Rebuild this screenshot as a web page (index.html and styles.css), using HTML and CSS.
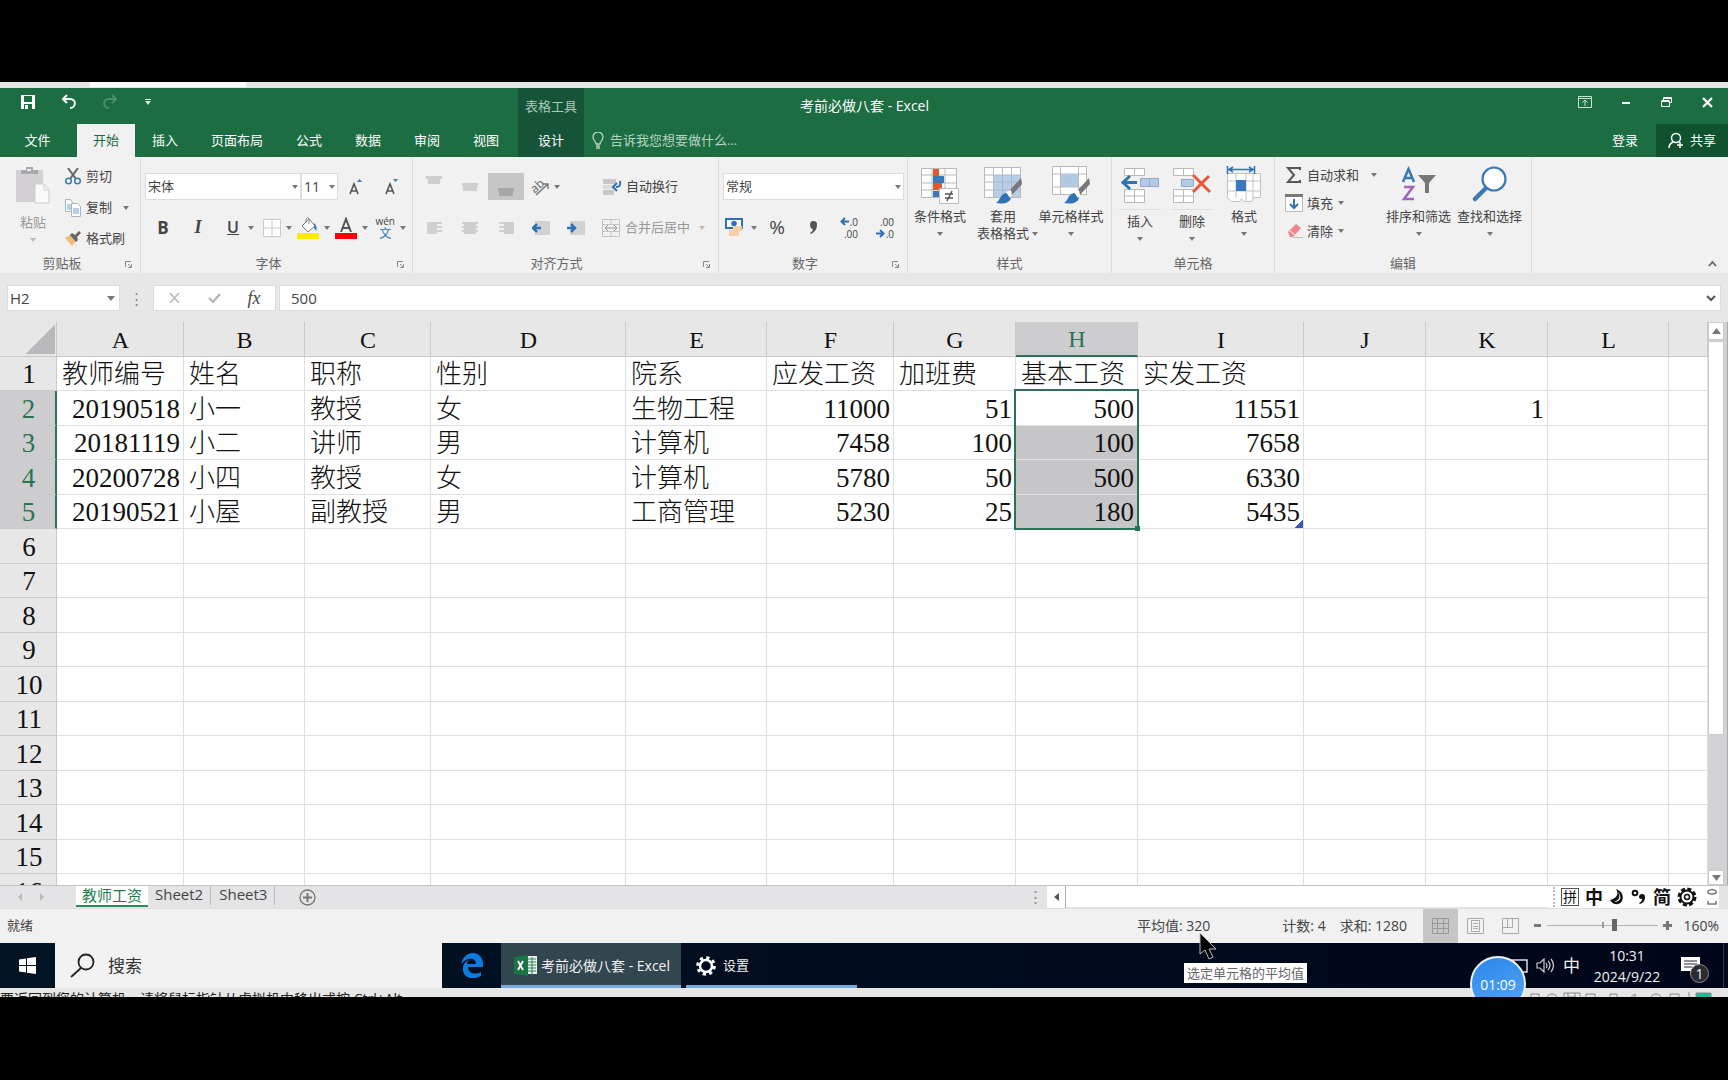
FILE: index.html
```html
<!DOCTYPE html>
<html lang="zh-CN">
<head>
<meta charset="utf-8">
<title>考前必做八套 - Excel</title>
<link rel="stylesheet" href="styles.css">
</head>
<body>
<div class="screen">
<div class="host-tabs"><span></span></div>
<header class="titlebar">
  <div class="title-left">
    <div class="quick">
      <button aria-label="保存"><svg width="16" height="16" viewBox="0 0 16 16"><path d="M1 1h14v14H1z" fill="#fff"/><path d="M4 2h8v6H4zM4 10h8v5H4z" fill="#1c6d42"/><path d="M5 11h3v4H5z" fill="#fff"/></svg></button>
      <button aria-label="撤消"><svg width="16" height="16" viewBox="0 0 16 16" fill="none" stroke="#fff" stroke-width="2"><path d="M6 1 2 5l4 4M2 5h7c7 0 6 9 0 9"/></svg></button>
      <button aria-label="恢复"><svg width="16" height="16" viewBox="0 0 16 16" fill="none" stroke="#4a8f6c" stroke-width="2"><path d="m10 1 4 4-4 4M14 5H7c-7 0-6 9 0 9"/></svg></button>
      <button aria-label="自定义"><svg width="8" height="8" viewBox="0 0 8 8" fill="#d5e6dc"><path d="M1 1h6v1H1zM1 3h6L4 7z"/></svg></button>
    </div>
    <nav class="tabs">
      <button class="tab file">文件</button><button class="tab active">开始</button><button class="tab">插入</button><button class="tab">页面布局</button><button class="tab">公式</button><button class="tab">数据</button><button class="tab">审阅</button><button class="tab">视图</button>
    </nav>
  </div>
  <div class="context"><span>表格工具</span><button class="tab">设计</button></div>
  <div class="title-main">
    <h1>考前必做八套 - Excel</h1>
    <label class="tell"><svg width="12" height="18" viewBox="0 0 12 18" fill="none" stroke="#b5d3c2" stroke-width="1.3"><path d="M4 12c0-3-3-3-3-7a5 5 0 0 1 10 0c0 4-3 4-3 7zM4 14h4M4 16h4"/></svg><input placeholder="告诉我您想要做什么..."></label>
  </div>
  <div class="title-right">
    <div class="winbtns">
      <button aria-label="功能区显示选项"><svg width="14" height="12" viewBox="0 0 14 12" fill="none" stroke="#c9dfd2"><path d="M.5.5h13v11H.5zM.5 2.500h13M7 10V4M4.500 6.500 7 4l2.500 2.500"/></svg></button>
      <button aria-label="最小化"><svg width="8" height="8" viewBox="0 0 8 8"><path d="M0 4h8v2H0z" fill="#fff"/></svg></button>
      <button aria-label="还原"><svg width="12" height="12" viewBox="0 0 12 12" fill="none" stroke="#fff"><path d="M.5 5.500h8v5h-8zM.5 4.500h8M2.500 4V1.500h8v5H9M2.500 2.500h8"/></svg></button>
      <button aria-label="关闭"><svg width="11" height="11" viewBox="0 0 11 11" stroke="#fff" stroke-width="2.200"><path d="m1 1 9 9M10 1l-9 9"/></svg></button>
    </div>
    <div class="account"><button class="login">登录</button><button class="share"><svg width="16" height="17" viewBox="0 0 16 17" fill="none" stroke="#fff" stroke-width="1.500"><circle cx="8" cy="6" r="4.500"/><path d="M1 16c0-4 2-5 4-6M9 13h6M12 10v6"/></svg>共享</button></div>
  </div>
</header>

<section class="ribbon">
  <div class="group clipboard">
    <div class="body">
      <button class="big low off"><svg width="36" height="38" viewBox="0 0 36 38"><path d="M1 4h27v32H1z" fill="#d3d0d3"/><path d="M6 8V4h5V1h7v3h5v4z" fill="#a9a8ac"/><path d="M12 3h4v2h-4z" fill="#eee"/><path d="M20 18h9l5 6v13H20z" fill="#fafafa" stroke="#ccc"/><path d="M29 18v6h5" fill="none" stroke="#ccc"/></svg><span>粘贴</span><i class="caret"></i></button>
      <div class="list">
        <button><svg width="16" height="17" viewBox="0 0 16 17" fill="none"><path d="m3 0 8 11M13 0 5 11" stroke="#666" stroke-width="2"/><circle cx="3.500" cy="13" r="2.800" stroke="#3c7ab5" stroke-width="1.500"/><circle cx="12.500" cy="13" r="2.800" stroke="#3c7ab5" stroke-width="1.500"/></svg>剪切</button>
        <button><svg width="16" height="18" viewBox="0 0 16 18" fill="#fff" stroke="#a9b4c4"><path d="M.5.5h5l2 3v9h-7z"/><path d="M2 5h4v6H2z" fill="#b4d0ee" stroke="none"/><path d="M6.500 4.500h6l3 3v10h-9z"/><path d="M8 9h6v6H8z" fill="#b4d0ee" stroke="none"/></svg>复制<i class="caret"></i></button>
        <button><svg width="16" height="15" viewBox="0 0 16 15"><path d="m0 7 5-3 6 6-4 5z" fill="#efbd77"/><path d="m5 4 2-2 3 2 4-4 2 2-4 4 1 3-2 2z" fill="#666"/></svg>格式刷</button>
      </div>
    </div>
    <footer>剪贴板<svg class="launch" viewBox="0 0 7 7"><path d="M.5 6V.5H6M3 3l3 3M6.500 3v3.500H3"/></svg></footer>
  </div>

  <div class="group font">
    <div class="rows">
      <div class="row"><select class="face" aria-label="字体"><option>宋体</option></select><select class="size" aria-label="字号"><option>11</option></select>
        <button class="w36" aria-label="增大字号"><svg width="14" height="18" viewBox="0 0 14 18"><path d="m1 16 4-10 4 10M2 13h6" fill="none" stroke="#555" stroke-width="1.600"/><path d="m8 4 2.500-3L13 4z" fill="#3c7ab5"/></svg></button>
        <button class="w36" aria-label="减小字号"><svg width="14" height="18" viewBox="0 0 14 18"><path d="m1 16 4-10 4 10M2 13h6" fill="none" stroke="#555" stroke-width="1.600"/><path d="m8 1 2.500 3L13 1z" fill="#3c7ab5"/></svg></button></div>
      <div class="row"><button class="glyph w36"><b>B</b></button><button class="glyph w34"><em>I</em></button><button class="glyph split wide"><u>U</u><i class="caret"></i></button>
        <button class="split" aria-label="边框"><svg width="18" height="18" viewBox="0 0 18 18" fill="#fff" stroke="#ccc"><path d="M.5.5h17v17H.5zM9 1v16M1 9h16"/></svg><i class="caret"></i></button>
        <button class="split" aria-label="填充颜色"><svg width="22" height="22" viewBox="0 0 22 22"><path d="m5 9 7-7 6 7-7 6z" fill="#fff" stroke="#777"/><path d="M9 6V2q2-3 3 0v5" fill="none" stroke="#888"/><path d="M17 6q4 4 2 8l-2-3z" fill="#3c7ab5"/><path d="M0 16h22v6H0z" fill="#ffed00"/></svg><i class="caret"></i></button>
        <button class="split" aria-label="字体颜色"><svg width="22" height="22" viewBox="0 0 22 22"><path d="M6 15 11 2l5 13M7.500 11h7" fill="none" stroke="#555" stroke-width="2"/><path d="M0 16h22v6H0z" fill="#fb0007"/></svg><i class="caret"></i></button>
        <button class="split phonetic"><span>wén<b>文</b></span><i class="caret"></i></button></div>
    </div>
    <footer>字体<svg class="launch" viewBox="0 0 7 7"><path d="M.5 6V.5H6M3 3l3 3M6.500 3v3.500H3"/></svg></footer>
  </div>

  <div class="group align">
    <div class="rows">
      <div class="row"><button class="w36 up" aria-label="顶端对齐"><svg width="16" height="8" viewBox="0 0 16 8" fill="#cfcfcf"><path d="M0 0h16v3H0zM2 3h12v5H2z"/></svg></button><button class="w36" aria-label="垂直居中"><svg width="16" height="8" viewBox="0 0 16 8" fill="#cfcfcf"><path d="M0 0h16v3H0zM1 3h14v5H1z"/></svg></button><button class="w36 pressed down" aria-label="底端对齐"><svg width="16" height="8" viewBox="0 0 16 8" fill="#a8a8a8"><path d="M0 0h16v3H0zM1 3h14v5H1z"/></svg></button>
        <button class="split turn" aria-label="方向"><svg width="19" height="18" viewBox="0 0 19 18"><text x="1" y="14" transform="rotate(-40 5 10)" font-size="12" fill="#666">ab</text><path d="M6 17 18 6M13 6h5v5" fill="none" stroke="#777" stroke-width="1.500"/></svg><i class="caret"></i></button>
        <button class="wide-btn"><svg width="19" height="16" viewBox="0 0 19 16"><path d="M0 0h13v5H0zM0 11h11v5H0z" fill="#c8c8c8"/><path d="M0 6h11v4H0z" fill="#dcdcdc"/><path d="M17 2c1 5-1 6-4 6M14 4l-4 4 4 4" fill="none" stroke="#2d72b5" stroke-width="2"/></svg>自动换行</button></div>
      <div class="row"><button class="w36" aria-label="左对齐"><svg width="15" height="12" viewBox="0 0 15 12" fill="#cfcfcf"><path d="M0 0h15v2H0zM0 4h15v2H0zM0 8h15v2H0zM0 0h10v12H0z"/></svg></button><button class="w36" aria-label="居中"><svg width="16" height="12" viewBox="0 0 16 12" fill="#cfcfcf"><path d="M0 0h16v2H0zM0 4h16v2H0zM0 8h16v2H0zM2 0h12v12H2z"/></svg></button><button class="w36" aria-label="右对齐"><svg width="15" height="12" viewBox="0 0 15 12" fill="#cfcfcf"><path d="M0 0h15v2H0zM0 4h15v2H0zM0 8h15v2H0zM5 0h10v12H5z"/></svg></button>
        <button class="w34" aria-label="减少缩进量"><svg width="18" height="14" viewBox="0 0 18 14"><path d="M3 0h15v14H3z" fill="#d2d2d4"/><path d="M9 7H2M5 3 1 7l4 4" fill="none" stroke="#2d72b5" stroke-width="2.500"/></svg></button><button class="w36" aria-label="增加缩进量"><svg width="18" height="14" viewBox="0 0 18 14"><path d="M3 0h15v14H3z" fill="#d2d2d4"/><path d="M0 7h7M4 3l4 4-4 4" fill="none" stroke="#2d72b5" stroke-width="2.500"/></svg></button>
        <button class="wide-btn off merge"><svg width="18" height="18" viewBox="0 0 18 18" fill="none" stroke="#c4c4c4"><path d="M.5.5h17v17H.5zM.5 5.500h17M.5 12.500h17M9 1v4M9 13v4"/><path d="M3 9h12M6 6 3 9l3 3M12 6l3 3-3 3" stroke="#999"/></svg>合并后居中<i class="caret"></i></button></div>
    </div>
    <footer>对齐方式<svg class="launch" viewBox="0 0 7 7"><path d="M.5 6V.5H6M3 3l3 3M6.500 3v3.500H3"/></svg></footer>
  </div>

  <div class="group number">
    <div class="rows">
      <div class="row"><select class="format" aria-label="数字格式"><option>常规</option></select></div>
      <div class="row"><button class="split" aria-label="会计数字格式"><svg width="18" height="19" viewBox="0 0 18 19"><path d="M1 1h16v9H1z" fill="#fff" stroke="#2d72b5" stroke-width="2"/><circle cx="9" cy="5.500" r="2.800" fill="#2d72b5"/><path d="M8 8h9v5h-3v5H4v-6h4z" fill="#f6cfa5"/></svg><i class="caret"></i></button><button class="w36 pct">%</button><button class="w36" aria-label="千位分隔样式"><svg width="8" height="13" viewBox="0 0 8 13"><path d="M1 3a3.500 3.500 0 1 1 7 1C8 8 6 11 2 13l-1-1c2-1 3-3 3-4-2 0-3-2-3-5z" fill="#555"/></svg></button>
        <button class="w36 dec"><span><svg width="9" height="9" viewBox="0 0 9 9"><path d="M9 4.500H2M5 1 1.500 4.500 5 8" fill="none" stroke="#2d72b5" stroke-width="2"/></svg>.0</span><span>.00</span></button><button class="w36 dec"><span>.00</span><span><svg width="9" height="9" viewBox="0 0 9 9"><path d="M0 4.500h7M4 1l3.500 3.500L4 8" fill="none" stroke="#2d72b5" stroke-width="2"/></svg>.0</span></button></div>
    </div>
    <footer>数字<svg class="launch" viewBox="0 0 7 7"><path d="M.5 6V.5H6M3 3l3 3M6.500 3v3.500H3"/></svg></footer>
  </div>

  <div class="group styles">
    <div class="body">
      <button class="big"><svg width="38" height="38" viewBox="0 0 38 38"><path d="M.5 2.500h35v29H.5zM.5 9h35M.5 17h35M.5 24h35M11 3v28M24 3v28" fill="#fff" stroke="#b9b9b9"/><path d="M12 3h6v7h-6zM12 17h9v7h-9z" fill="#e0592c"/><path d="M12 10h11v7H12zM12 25h6v6h-6z" fill="#3a78b8"/><path d="M18.500 22.500h19v15h-19z" fill="#fff" stroke="#bbb"/><path d="M24 28h8M24 32h8M31 25l-5 10" stroke="#555" stroke-width="1.500"/></svg><span>条件格式</span><i class="caret"></i></button>
      <button class="big"><svg width="38" height="38" viewBox="0 0 38 38"><path d="M.5 1.500h36v30H.5zM.5 9h36M.5 16h36M.5 24h36M9.500 2v29M18.500 2v29M27.500 2v29" fill="#fff" stroke="#b9b9b9"/><path d="M10 9h26v22H10z" fill="#9ab9dc" opacity=".7"/><path d="m37 12-12 13 3 4 10-11z" fill="#777"/><path d="M12 37c4-2 4-9 10-10q5 1 5 5c-2 6-9 6-15 5z" fill="#2f73b6"/><path d="m22 26 5-2 1 5-2 3z" fill="#fff"/></svg><span>套用<br>表格格式<i class="caret"></i></span></button>
      <button class="big"><svg width="38" height="38" viewBox="0 0 38 38"><path d="M.5.5h34v28H.5zM.5 8h34M.5 21h34M8.500 1v28M26.500 1v28" fill="#fff" stroke="#b9b9b9"/><path d="M9 8h17v13H9z" fill="#b1c9e2"/><path d="m37 12-12 13 3 4 10-11z" fill="#777"/><path d="M12 37c4-2 4-9 10-10q5 1 5 5c-2 6-9 6-15 5z" fill="#2f73b6"/><path d="m22 26 5-2 1 5-2 3z" fill="#fff"/></svg><span>单元格样式</span><i class="caret"></i></button>
    </div>
    <footer>样式</footer>
  </div>

  <div class="group cells">
    <div class="body">
      <button class="big low ruled"><svg width="38" height="38" viewBox="0 0 38 38"><path d="M3.500 2.500h20v7h-20zM13.500 2.500v7M3.500 23.500h20v13h-20zM3.500 30h20M13.500 24v12" fill="#fff" stroke="#b9b9b9"/><path d="M19.500 12.500h18v8h-18zM28.500 12v8" fill="#b4cbe6" stroke="#8fa9c6"/><path d="M16 16.500H3M9 10l-7 6.500L9 23" fill="none" stroke="#2f73b6" stroke-width="3"/></svg><span>插入</span><i class="caret"></i></button>
      <button class="big low ruled"><svg width="38" height="38" viewBox="0 0 38 38"><path d="M.5 2.500h20v7H.5zM10.500 2.500v7M.5 23.500h20v13H.5zM.5 30h20M10.500 24v12" fill="#fff" stroke="#b9b9b9"/><path d="M8.500 13.500h12v7h-12z" fill="#b4cbe6" stroke="#8fa9c6"/><path d="m20 9 17 17M36 10 20 26" stroke="#e8573a" stroke-width="3"/></svg><span>删除</span><i class="caret"></i></button>
      <button class="big"><svg width="36" height="38" viewBox="0 0 36 38"><path d="M1.500 7.500h33v24h-7l-2 4h-8l-2-3-2 3h-8l-4-4zM1 15h33M1 25h33M10 8v24M20 8v27M27 8v24" fill="#fff" stroke="#c2c2c2"/><path d="M10 14h10v11H10z" fill="#3b76c2"/><path d="M1.500 0v8M28.500 0v8M3 3.500h24M7 1 3 3.500 7 6M23 1l4 2.500L23 6" fill="none" stroke="#2f73b6" stroke-width="1.500"/></svg><span>格式</span><i class="caret"></i></button>
    </div>
    <footer>单元格</footer>
  </div>

  <div class="group editing">
    <div class="body">
      <div class="list">
        <button><svg width="18" height="18" viewBox="0 0 18 18" fill="none" stroke="#555" stroke-width="2"><path d="M15 4V2H3l6 7-6 7h12v-2"/></svg>自动求和<i class="caret far"></i></button>
        <button><svg width="18" height="18" viewBox="0 0 18 18"><path d="M.5.5h17v17H.5z" fill="#fff" stroke="#bbb"/><path d="M0 0h18v3H0z" fill="#777"/><path d="M9 5v9M5 10l4 4 4-4" fill="none" stroke="#2f73b6" stroke-width="2"/></svg>填充<i class="caret"></i></button>
        <button><svg width="18" height="16" viewBox="0 0 18 16"><path d="m3 9 8-8 5 4-8 9H5z" fill="#f0868c"/><path d="m5 8 5 4" stroke="#fff"/><path d="M8 14.500h10" stroke="#bbb"/></svg>清除<i class="caret"></i></button>
      </div>
      <button class="big"><svg width="36" height="38" viewBox="0 0 36 38"><g fill="none" stroke-width="2.500"><path d="M2 16 7.500 3 13 16M4 12h7" stroke="#3a78b8"/><path d="M3 21h9L3 33h10" stroke="#a066bd"/></g><path d="M17 9h18l-7 8v10h-4V17z" fill="#777"/></svg><span>排序和筛选</span><i class="caret"></i></button>
      <button class="big"><svg width="36" height="38" viewBox="0 0 36 38"><path d="M3 33 15 21" stroke="#3a78b8" stroke-width="4.500" stroke-linecap="round"/><circle cx="22" cy="13" r="11.500" fill="#fff" stroke="#3a78b8" stroke-width="2.200"/></svg><span>查找和选择</span><i class="caret"></i></button>
    </div>
    <footer>编辑</footer>
  </div>
  <button class="collapse" aria-label="折叠功能区"><svg width="9" height="6" viewBox="0 0 9 6" fill="none" stroke="#666" stroke-width="1.800"><path d="m1 5 3.500-4L8 5"/></svg></button>
</section>

<section class="formula">
  <label class="namebox"><input value="H2" aria-label="名称框"><i class="caret big-caret"></i></label>
  <span class="dots">⋮</span>
  <div class="fx"><button aria-label="取消"><svg width="11" height="10" viewBox="0 0 11 10" stroke="#bdbdbd" stroke-width="1.800"><path d="m1 0 9 10M10 0 1 10"/></svg></button><button aria-label="输入"><svg width="13" height="10" viewBox="0 0 13 10" fill="none" stroke="#b5b5b5" stroke-width="2.200"><path d="m1 5 4 4 7-8"/></svg></button><button class="fxb"><em>fx</em></button></div>
  <label class="entry"><input value="500" aria-label="编辑栏"><svg width="10" height="7" viewBox="0 0 10 7" fill="none" stroke="#555" stroke-width="2"><path d="m1 1 4 4 4-4"/></svg></label>
</section>

<main class="sheet">
<div class="grid">
<table>
<colgroup><col class="c-row"><col class="c-a"><col class="c-b"><col class="c-c"><col class="c-d"><col class="c-e"><col class="c-f"><col class="c-g"><col class="c-g"><col class="c-i"><col class="c-g"><col class="c-g"><col class="c-b"><col></colgroup>
<thead><tr><th class="corner"></th><th>A</th><th>B</th><th>C</th><th>D</th><th>E</th><th>F</th><th>G</th><th class="on">H</th><th>I</th><th>J</th><th>K</th><th>L</th><th></th></tr></thead>
<tbody>
<tr><th>1</th><td>教师编号</td><td>姓名</td><td>职称</td><td>性别</td><td>院系</td><td>应发工资</td><td>加班费</td><td>基本工资</td><td>实发工资</td><td></td><td></td><td></td><td></td></tr>
<tr><th class="on">2</th><td class="n">20190518</td><td>小一</td><td>教授</td><td>女</td><td>生物工程</td><td class="n">11000</td><td class="n">51</td><td class="n anchor">500<div class="selection"></div></td><td class="n">11551</td><td></td><td class="n">1</td><td></td><td></td></tr>
<tr><th class="on">3</th><td class="n">20181119</td><td>小二</td><td>讲师</td><td>男</td><td>计算机</td><td class="n">7458</td><td class="n">100</td><td class="n sel">100</td><td class="n">7658</td><td></td><td></td><td></td><td></td></tr>
<tr><th class="on">4</th><td class="n">20200728</td><td>小四</td><td>教授</td><td>女</td><td>计算机</td><td class="n">5780</td><td class="n">50</td><td class="n sel">500</td><td class="n">6330</td><td></td><td></td><td></td><td></td></tr>
<tr><th class="on">5</th><td class="n">20190521</td><td>小屋</td><td>副教授</td><td>男</td><td>工商管理</td><td class="n">5230</td><td class="n">25</td><td class="n sel">180</td><td class="n table-end">5435</td><td></td><td></td><td></td><td></td></tr>
<tr><th>6</th><td></td><td></td><td></td><td></td><td></td><td></td><td></td><td></td><td></td><td></td><td></td><td></td><td></td></tr>
<tr><th>7</th><td></td><td></td><td></td><td></td><td></td><td></td><td></td><td></td><td></td><td></td><td></td><td></td><td></td></tr>
<tr><th>8</th><td></td><td></td><td></td><td></td><td></td><td></td><td></td><td></td><td></td><td></td><td></td><td></td><td></td></tr>
<tr><th>9</th><td></td><td></td><td></td><td></td><td></td><td></td><td></td><td></td><td></td><td></td><td></td><td></td><td></td></tr>
<tr><th>10</th><td></td><td></td><td></td><td></td><td></td><td></td><td></td><td></td><td></td><td></td><td></td><td></td><td></td></tr>
<tr><th>11</th><td></td><td></td><td></td><td></td><td></td><td></td><td></td><td></td><td></td><td></td><td></td><td></td><td></td></tr>
<tr><th>12</th><td></td><td></td><td></td><td></td><td></td><td></td><td></td><td></td><td></td><td></td><td></td><td></td><td></td></tr>
<tr><th>13</th><td></td><td></td><td></td><td></td><td></td><td></td><td></td><td></td><td></td><td></td><td></td><td></td><td></td></tr>
<tr><th>14</th><td></td><td></td><td></td><td></td><td></td><td></td><td></td><td></td><td></td><td></td><td></td><td></td><td></td></tr>
<tr><th>15</th><td></td><td></td><td></td><td></td><td></td><td></td><td></td><td></td><td></td><td></td><td></td><td></td><td></td></tr>
<tr><th>16</th><td></td><td></td><td></td><td></td><td></td><td></td><td></td><td></td><td></td><td></td><td></td><td></td><td></td></tr>
</tbody>
</table>
</div>
<div class="vscroll"><button aria-label="向上"><svg width="9" height="6" viewBox="0 0 9 6"><path d="m0 6 4.500-6L9 6z" fill="#777"/></svg></button><div class="thumb"></div><button class="end" aria-label="向下"><svg width="9" height="6" viewBox="0 0 9 6"><path d="m0 0 4.500 6L9 0z" fill="#777"/></svg></button></div>
</main>

<section class="sheettabs">
  <div class="nav"><svg width="4" height="8" viewBox="0 0 4 8"><path d="M4 0v8L0 4z" fill="#bbb"/></svg><svg width="4" height="8" viewBox="0 0 4 8"><path d="M0 0v8l4-4z" fill="#bbb"/></svg></div>
  <button class="st active">教师工资</button><button class="st">Sheet2</button><button class="st">Sheet3</button>
  <button class="add" aria-label="新工作表"><svg width="17" height="17" viewBox="0 0 17 17" fill="none" stroke="#777" stroke-width="1.300"><circle cx="8.500" cy="8.500" r="7.500"/><path d="M4 8.500h9M8.500 4v9" stroke-width="2"/></svg></button>
  <div class="hscroll"><span class="dots">⋮</span><button aria-label="向左"><svg width="5" height="8" viewBox="0 0 5 8"><path d="M5 0v8L0 4z" fill="#555"/></svg></button><div class="track"></div></div>
  <div class="ime"><i class="grip"></i><span class="boxed">拼</span><b>中</b><svg width="16" height="18" viewBox="0 0 16 18"><path d="M7 1c3 5 1 9-6 11 3 5 9 6 12 1C15 8 13 3 7 1z" fill="#111"/><path d="M8 3c4 4 3 9-3 11 8 0 8-7 3-11z" fill="#fff"/></svg><svg width="16" height="18" viewBox="0 0 16 18"><circle cx="4" cy="5" r="2.300" fill="none" stroke="#111" stroke-width="2"/><path d="M8 9a3 3 0 1 1 6 0c0 4-2 6-5 7l-1-1c2-1 3-2 3-4-2 0-3-1-3-2z" fill="#111"/></svg><b>简</b><svg width="20" height="20" viewBox="0 0 20 20" fill="none" stroke="#111"><circle cx="10" cy="10" r="8" stroke-width="3" stroke-dasharray="4 2.300"/><circle cx="10" cy="10" r="6.500" stroke-width="2"/><circle cx="10" cy="10" r="2.500" stroke-width="1.500"/></svg><svg class="ime-end" width="10" height="18" viewBox="0 0 10 18" fill="none" stroke="#777" stroke-width="1.500"><path d="M1 5V3q4-3 8 0v2q-4 2-8 0M1 13v3h8v-3"/></svg></div>
</section>

<section class="status">
  <span>就绪</span>
  <span class="avg">平均值: 320</span><span class="cnt">计数: 4</span><span class="sum">求和: 1280</span>
  <div class="views">
    <button class="pressed" aria-label="普通"><svg width="17" height="16" viewBox="0 0 17 16" fill="none" stroke="#999"><path d="M.5.500h16v15H.5zM.5 5.500h16M.5 10.500h16M5.500.500v15M11.500.500v15"/></svg></button>
    <button aria-label="页面布局"><svg width="17" height="16" viewBox="0 0 17 16" fill="none" stroke="#aaa"><path d="M.5.500h16v15H.5zM4.500 2.500h8v11h-8zM6 5.500h5M6 8.500h5M6 10.500h5"/></svg></button>
    <button aria-label="分页预览"><svg width="17" height="16" viewBox="0 0 17 16" fill="none" stroke="#aaa"><path d="M.5.500h16v15H.5zM.5 9.500h10v-9M5.500.500v9"/></svg></button>
  </div>
  <button class="zoom-btn" aria-label="缩小"><svg width="7" height="3" viewBox="0 0 7 3"><path d="M0 0h7v3H0z" fill="#777"/></svg></button>
  <input type="range" min="0" max="100" value="61" aria-label="缩放">
  <button class="zoom-btn" aria-label="放大"><svg width="9" height="9" viewBox="0 0 9 9"><path d="M0 3h9v3H0zM3 0h3v9H3z" fill="#777"/></svg></button>
  <span class="pctv">160%</span>
</section>

<section class="taskbar">
  <button class="start" aria-label="开始"><svg width="17" height="17" viewBox="0 0 17 17" fill="#fff"><path d="m0 2.500 7-1V8H0zM8 1.300 17 0v8H8zM0 9h7v6.500l-7-1zM8 9h9v8l-9-1.300z"/></svg></button>
  <label class="search"><svg width="25" height="25" viewBox="0 0 25 25" fill="none" stroke="#222" stroke-width="1.800"><circle cx="16" cy="9" r="7.500"/><path d="M11 15 1 24"/></svg><input placeholder="搜索" aria-label="搜索"></label>
  <button class="edge" aria-label="Edge"><svg width="22" height="25" viewBox="0 0 22 25"><path d="M0 11C2 4 6 0 12 0c7 0 10 6 10 11v3H7c0 7 8 8 13 5v4C11 28 1 24 2 15c0-4 3-7 6-8-1 1-2 2-2 4h9c0-7-9-7-15 0z" fill="#0a7be0"/></svg></button>
  <button class="task current"><svg width="24" height="21" viewBox="0 0 24 21"><path d="M13 1h10v18H13z" fill="#e8f3ec"/><path d="M14 4h8M14 7h8M14 10h8M14 13h8M14 16h8M18 2v17" stroke="#35805a"/><path d="M0 2 14 0v21L0 19z" fill="#1b7443"/><path d="m4 6 5 9M9 6l-5 9" stroke="#fff" stroke-width="1.800"/></svg>考前必做八套 - Excel</button>
  <button class="task settings"><svg width="20" height="20" viewBox="0 0 20 20" fill="none" stroke="#fff"><circle cx="10" cy="10" r="6" stroke-width="2.500"/><circle cx="10" cy="10" r="8.300" stroke-width="3" stroke-dasharray="3.200 3.320"/></svg>设置</button>
  <div class="tray">
    <svg class="net" width="20" height="14" viewBox="0 0 20 14" fill="none" stroke="#ddd" stroke-width="1.500"><path d="M1 1h18v12H1z"/></svg>
    <svg width="18" height="15" viewBox="0 0 18 15" fill="none" stroke="#ccc" stroke-width="1.200"><path d="M1 5h3l4-4v13l-4-4H1zM10 5q2 3 0 5M12 3q4 4 0 9M15 1q5 6 0 13"/></svg>
    <span class="lang">中</span>
    <time>10:31<br>2024/9/22</time>
    <span class="notice"><svg width="19" height="18" viewBox="0 0 19 18"><path d="M0 0h19v14h-6l-4 4v-4H0z" fill="#fff"/><path d="M3 4h13M3 7h13M3 10h8" stroke="#223"/></svg><i>1</i></span>
  </div>
</section>
<div class="host-status"><span>要返回到您的计算机，请将鼠标指针从虚拟机中移出或按 Ctrl+Alt。</span><svg width="190" height="9" viewBox="0 0 190 9" fill="none" stroke="#888"><path d="M5 9V5h8v4M38 9V4h16v5M42 4v4h7V4M60 9V5h9v4M84 9V5h7v4M104 9l5-4v4M144 9V5h9v4M163 3v6"/><circle cx="26" cy="11" r="6"/><circle cx="130" cy="11" r="6"/><path d="M170 4h15v5h-15z" fill="#2bb39b"/></svg></div>

<div class="tip">选定单元格的平均值</div>
<svg class="cursor" width="18" height="29" viewBox="0 0 18 29"><path d="M1 1v21l5-4 4 9 4-2-4-8h7z" fill="#000" stroke="#bbb"/></svg>
<div class="timer">01:09</div>
</div>
</body>
</html>
```
FILE: styles.css
```css
* { box-sizing: border-box; }
body {
  margin: 0;
  height: 100vh;
  padding: 82px 0 83px;
  background: #000;
  color: #444;
  font: 13px/17px "Open Sans", "Noto Sans CJK SC", sans-serif;
}
button, input, select { font: inherit; color: inherit; border: 0; padding: 0; margin: 0; background: none; border-radius: 0; outline: 0; }
button { display: flex; align-items: center; justify-content: center; white-space: nowrap; flex: none; }
input { min-width: 0; width: 100%; }
svg { flex: none; display: block; }
.screen { position: relative; height: 100%; display: flex; flex-direction: column; overflow: hidden; background: #e9e9e9; }
.screen > * { flex: none; }

.host-tabs { height: 6px; background: #e4e4e4; padding-left: 90px; }
.host-tabs span { display: block; width: 156px; height: 5px; background: #fbfbfb; }

/* title bar and ribbon tabs */
.titlebar { display: flex; height: 69px; background: #1c6d42; color: #fff; }
.title-left { width: 518px; }
.quick { display: flex; height: 28px; margin: 0 0 8px 7px; }
.quick button { width: 41px; }
.quick button:last-child { width: 36px; }
.tabs { display: flex; }
.tab { height: 33px; padding: 0 16px 0 17px; }
.tab.file { width: 77px; padding: 0 2px 0 0; }
.tab.active { padding: 0 16px; background: #f1f1f1; color: #1c6d42; }
.context { width: 66px; background: #16543a; text-align: center; color: #a9c9b8; }
.context span { display: block; height: 36px; line-height: 36px; }
.context .tab { width: 66px; padding: 0; color: #fff; }
.title-main { flex: 1; min-width: 0; padding-left: 8px; }
h1 { margin: 0; font-size: 14px; font-weight: 400; line-height: 35px; height: 36px; padding-left: 208px; white-space: nowrap; }
.tell { display: flex; align-items: center; height: 33px; gap: 6px; color: #b5d3c2; }
.tell input { width: 200px; }
.tell input::placeholder { color: #b5d3c2; opacity: 1; }
.winbtns { display: flex; height: 28px; margin-bottom: 8px; justify-content: flex-end; }
.winbtns button { width: 41px; }
.account { display: flex; justify-content: flex-end; height: 33px; }
.login { width: 62px; }
.share { width: 72px; gap: 6px; background: #10512f; }

/* ribbon */
.ribbon { display: flex; height: 116px; background: #f1f1f2; }
.group { display: flex; flex-direction: column; flex: none; border-right: 1px solid #dcdcdc; }
.group footer { position: relative; height: 18px; line-height: 17px; text-align: center; color: #666; }
.clipboard { width: 141px; } .font { width: 272px; } .align { width: 306px; } .number { width: 189px; }
.styles { width: 204px; } .cells { width: 163px; } .editing { width: 257px; }
.clipboard footer { padding-right: 16px; }
.font footer, .number footer { padding-right: 16px; }
.align footer { padding-right: 18px; }
.launch { position: absolute; right: 8px; top: 6px; width: 7px; height: 7px; fill: none; stroke: #888; }
.body { display: flex; height: 98px; }
.rows { height: 98px; padding-top: 16px; display: flex; flex-direction: column; gap: 14px; }
.row { display: flex; height: 27px; padding-left: 4px; }
.align .row { padding-left: 3px; }
.row button { height: 27px; }
.caret { width: 0; height: 0; margin: 0 2px; border: 3px solid transparent; border-top: 4px solid #777; border-bottom: 0; flex: none; }
.off .caret { border-top-color: #bbb; }
.w34 { width: 34px; }
.w36 { width: 36px; }
.split { width: 38px; justify-content: flex-end; gap: 3px; }
.split.wide { width: 41px; gap: 7px; }
.glyph { font-size: 17px; }
.glyph em { font-family: "Liberation Serif", serif; font-weight: 700; font-size: 18px; }
.glyph u { font-weight: 600; font-size: 16px; }
.phonetic { line-height: 12px; font-size: 10px; text-align: center; }
.phonetic b { display: block; line-height: 14px; font-weight: 400; font-size: 12px; color: #2d72b5; }
select { appearance: none; height: 27px; border: 1px solid #dcdcdc; padding: 0 2px; color: #444; }
.face, .size, .format {
  background: url("data:image/svg+xml,%3Csvg xmlns='http://www.w3.org/2000/svg' width='6' height='4'%3E%3Cpath d='M0 0h6L3 4z' fill='%23777'/%3E%3C/svg%3E") right 2px center no-repeat #fff;
}
.face { width: 156px; }
.size { width: 37px; font-size: 14px; }
.format { width: 181px; }
.row .up { align-items: flex-start; padding-top: 3px; }
.row .down { align-items: flex-end; padding-bottom: 4px; }
.pressed { background: #c6c6c6; }
.turn svg { overflow: visible; }
.wide-btn { gap: 4px; margin-left: 41px; }
.merge { margin-left: 8px; gap: 5px; }
.merge .caret { margin-left: 4px; }
.off { color: #999; }
.number .split { width: 36px; gap: 6px; }
.pct { font-size: 19px; }
.dec { flex-direction: column; align-items: flex-end; font-size: 10px; line-height: 12px; padding-right: 9px; }
.dec span { display: flex; align-items: center; height: 12px; gap: 1px; }
.big { flex-direction: column; justify-content: flex-start; align-items: center; padding-top: 9px; height: 98px; }
.big span { margin-top: 4px; position: relative; }
.big > .caret { margin-top: 7px; }
.big span .caret { position: absolute; right: -11px; bottom: 6px; }
.big.low span { margin-top: 10px; }
.clipboard .big { width: 62px; padding-left: 4px; }
.clipboard .list { padding-top: 4px; margin-left: 3px; }
.list button { justify-content: flex-start; gap: 5px; height: 31px; }
.list .caret { margin-left: 6px; }
.styles .body { padding-left: 2px; }
.styles .big:nth-child(1) { width: 60px; } .styles .big:nth-child(2) { width: 66px; } .styles .big:nth-child(3) { width: 70px; }
.cells .body { padding-left: 2px; }
.cells .big { width: 52px; }
.ruled span { padding: 3px 8px 0; border-top: 1px solid #dedede; }
.cells .big.low span { margin-top: 5px; }
.editing .list { width: 98px; padding-top: 4px; margin-left: 10px; }
.editing .list button { height: 28px; gap: 4px; }
.editing .list .caret { margin-left: 1px; }
.editing .list .caret.far { margin-left: 8px; }
.editing .big { width: 71px; }
.collapse { margin-left: auto; align-self: flex-end; width: 32px; height: 18px; }

/* formula bar */
.formula { display: flex; height: 49px; padding: 12px 7px 11px; background: #e7e7e8; }
.formula label, .fx { display: flex; align-items: center; height: 26px; background: #fff; border: 1px solid #dcdcdc; font-size: 15px; }
.formula input { height: 22px; padding-bottom: 1px; }
.namebox { width: 113px; padding: 0 4px 0 2px; }
.big-caret { border-width: 5px 4px 0; margin: 0; }
.dots { width: 33px; text-align: center; line-height: 26px; color: #888; font-size: 15px; }
.fx { width: 123px; }
.fx button { width: 40px; }
.fxb em { font: italic 18px "Liberation Serif", serif; }
.formula .entry { flex: 1; margin-left: 3px; padding: 0 4px 0 11px; }

/* worksheet */
.screen > .sheet { flex: 1 1 0; min-height: 0; display: flex; overflow: hidden; }
.grid { flex: 1; overflow: hidden; background: #fff; }
table { width: 100%; table-layout: fixed; border-collapse: separate; border-spacing: 0; color: #111; font: 300 26px/31px "Liberation Serif", "Noto Sans CJK SC", serif; }
.c-row { width: 57px; } .c-a { width: 127px; } .c-b { width: 121px; } .c-c { width: 126px; } .c-d { width: 195px; }
.c-e { width: 141px; } .c-f { width: 127px; } .c-g { width: 122px; } .c-i { width: 166px; }
th, td { padding: 2px 0 0; border: solid #dfdfe2; border-width: 0 1px 1px 0; white-space: nowrap; overflow: hidden; }
th { font-weight: 400; background: #e7e7e8; border-color: #c9c9cc; }
thead th { height: 34px; font-size: 24px; padding-left: 1px; }
tbody tr { height: 35px; }
tbody tr:nth-child(odd) { height: 34px; }
tbody th { font-size: 27px; padding-left: 2px; }
td { padding-left: 5px; text-align: left; }
td.n { text-align: right; padding: 2px 3px 0 0; font-size: 27px; }
th.on { background: #cdcdd0; color: #2c7355; }
thead th.on { border-bottom: 2px solid #2c7355; }
tbody th.on { border-right: 2px solid #2c7355; }
.sel { background: #c6c6c8; }
.anchor { position: relative; overflow: visible; }
.selection { position: absolute; left: -2px; top: -2px; right: -2px; height: 141px; border: 2px solid #2c7355; z-index: 1; }
.selection::after { content: ""; position: absolute; right: -3px; bottom: -3px; width: 5px; height: 5px; background: #2c7355; }
.corner { background: linear-gradient(135deg, transparent 50%, #b9b9bb 50%) 26px 3px / 29px 29px no-repeat #e7e7e8; }
.table-end { background: linear-gradient(135deg, transparent 50%, #3d55b5 50%) right bottom / 8px 8px no-repeat; }
.vscroll { width: 20px; flex: none; background: #d2d2d5; display: flex; flex-direction: column; padding-right: 3px; border-right: 1px solid #aaa; }
.vscroll button { height: 18px; background: #fff; border: 1px solid #ccc; }
.vscroll .thumb { flex: 0 1 70%; background: #fff; border: 1px solid #ccc; margin-top: 1px; }
.vscroll .end { margin-top: auto; height: 15px; }

.sheettabs { display: flex; height: 23px; background: #e4e4e6; border-top: 1px solid #c4c4c6; }
.nav { width: 76px; display: flex; align-items: center; gap: 18px; padding-left: 18px; }
.st { font-size: 15px; height: 19px; margin-right: 1px; padding: 0 7px 2px; border-right: 1px solid #bbb; }
.st.active { width: 72px; margin: 0; height: 21px; padding: 0 6px; background: #fff; color: #1c7d4c; border: 0; border-bottom: 2px solid #2c8a5c; }
.add { width: 62px; }
.hscroll { flex: 1; display: flex; justify-content: flex-end; }
.hscroll .dots { width: 24px; line-height: 21px; }
.hscroll button { width: 19px; background: #fff; border-right: 1px solid #aaa; }
.hscroll .track { width: 482px; background: #fff; margin-bottom: 1px; }
.ime { width: 171px; margin-right: 9px; display: flex; align-items: center; gap: 6px; background: #fff; color: #111; padding: 0 2px 0 5px; font-size: 17px; }
.ime b { font-weight: 700; font-size: 18px; }
.grip { width: 1px; height: 20px; border-left: 2px dotted #bbb; }
.boxed { border: 1px solid #555; font-size: 14px; width: 18px; height: 18px; line-height: 16px; text-align: center; }
.ime-end { margin-left: auto; }

.status { display: flex; align-items: center; height: 35px; padding: 0 9px 2px 7px; background: #f1f1f2; border-top: 1px solid #ddd; white-space: nowrap; }
.avg { margin-left: auto; }
.avg, .cnt, .sum, .pctv { font-size: 14px; }
.cnt { margin-left: 72px; }
.sum { margin: 0 16px 0 14px; }
.views { display: flex; align-self: stretch; margin-bottom: -2px; }
.views button { width: 35px; }
.zoom-btn { width: 19px; }
input[type=range] { appearance: none; width: 111px; height: 12px; background: linear-gradient(#999, #999) center / 2px 6px no-repeat, linear-gradient(#b5b5b5, #b5b5b5) center / 100% 1px no-repeat; }
input[type=range]::-webkit-slider-thumb { appearance: none; width: 5px; height: 12px; background: #666; }
.pctv { width: 42px; text-align: right; }

/* Windows taskbar */
.taskbar { display: flex; height: 45px; background: linear-gradient(90deg, #001424, #00061a); color: #f1f1f1; font-size: 14px; }
.start { width: 55px; }
.search { width: 387px; background: #f2f2f3; display: flex; align-items: center; gap: 13px; padding-left: 15px; font-size: 17px; }
.search input { width: 200px; color: #333; }
.search input::placeholder { color: #333; opacity: 1; }
.edge { width: 59px; }
.task { justify-content: flex-start; gap: 3px; padding-top: 3px; border-bottom: 3px solid #77aadd; height: 45px; font-size: 14px; }
.current { width: 180px; padding-left: 13px; background: #31464f; }
.settings { width: 171px; margin-left: 5px; padding-left: 10px; gap: 7px; font-size: 13px; }
.tray { margin-left: auto; display: flex; align-items: center; padding-right: 23px; margin-right: 4px; border-right: 1px solid #334; }
.net { margin-right: 8px; }
.lang { font-size: 17px; margin: 0 13px 0 9px; }
time { text-align: center; line-height: 21px; width: 68px; }
.notice { position: relative; margin-left: 20px; }
.notice i { position: absolute; left: 9px; top: 7px; width: 19px; height: 19px; border-radius: 50%; border: 1px solid #888; background: #2b2b33; font-style: normal; font-size: 14px; line-height: 17px; text-align: center; }
.host-status { height: 9px; overflow: hidden; display: flex; justify-content: space-between; background: #e6e6e4; color: #222; font-size: 14px; line-height: 20px; padding: 1px 12px 0 0; }

/* floating items */
.tip { position: absolute; right: 421px; bottom: 14px; height: 20px; padding: 0 3px; line-height: 20px; background: #fff; color: #666; }
.cursor { position: absolute; right: 511px; bottom: 36px; }
.timer { position: absolute; right: 202px; bottom: -15px; width: 56px; height: 56px; border-radius: 50%; border: 2px solid #eef4fb; background: linear-gradient(160deg, #2c86e8, #55a6f8); color: #fff; font-size: 14px; line-height: 53px; text-align: center; }
```
